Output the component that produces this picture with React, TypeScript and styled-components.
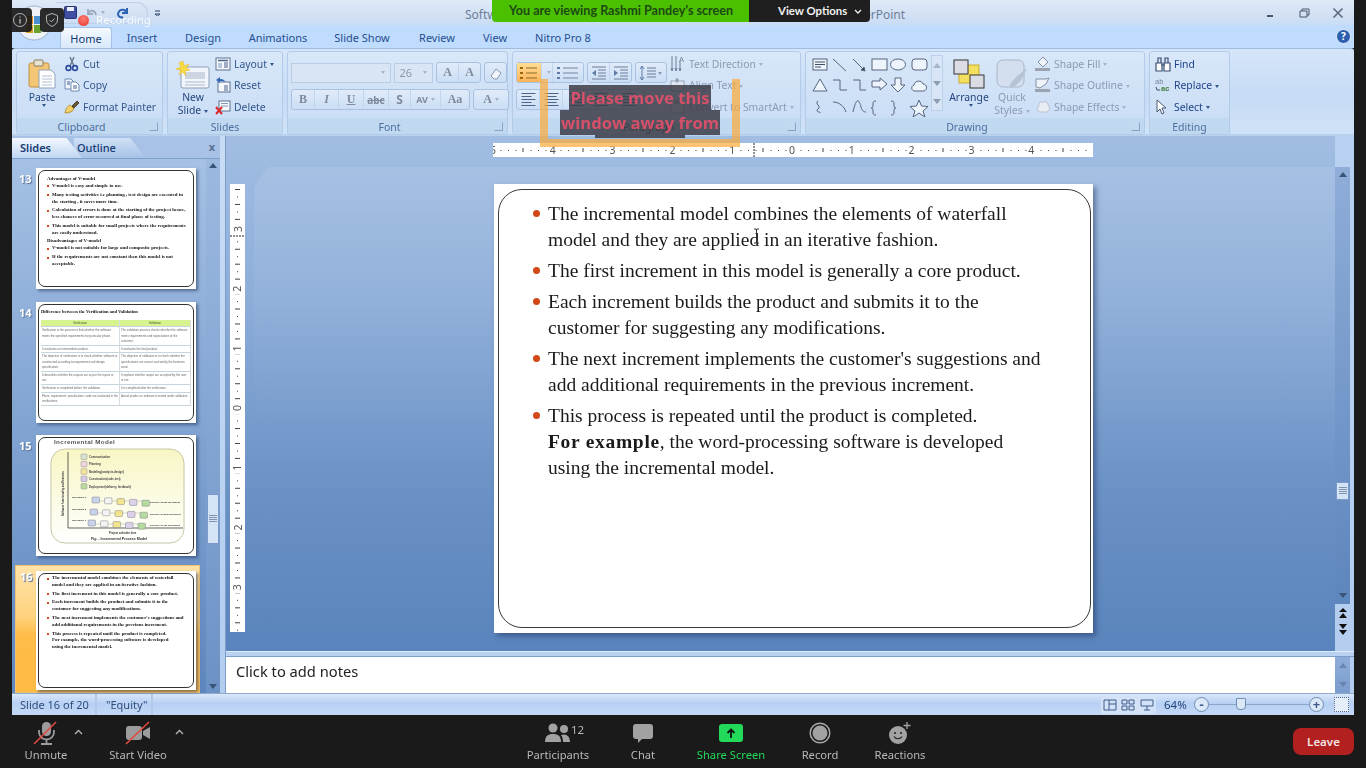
import React from 'react';
import styled, { createGlobalStyle } from 'styled-components';

const GlobalStyle = createGlobalStyle`
  html, body { margin: 0; padding: 0; background: #1a1a1a; }
  body { font-family: "Noto Sans", "Open Sans", sans-serif; overflow: hidden; }
`;

const Page = styled.div`
  position: relative;
  width: 1366px;
  height: 768px;
  display: flex;
  flex-direction: column;
  background: #1a1a1a;
  overflow: hidden;
`;

const Screen = styled.div`
  width: 1342px;
  height: 715px;
  margin-left: 12px;
  display: flex;
  flex-direction: column;
  overflow: hidden;
  filter: blur(0.35px);
`;

/* title bar + tabs */
const TitleBar = styled.div`
  height: 25px;
  flex: none;
  display: flex;
  align-items: center;
  background: linear-gradient(#e0eaf8, #d3e1f4 55%, #c9dcf6);
  color: #6d7f99;
  font-size: 12px;
`;

const Qat = styled.div`
  width: 92px;
  height: 22px;
  margin: 0 0 0 44px;
  padding-left: 8px;
  box-sizing: border-box;
  display: flex;
  align-items: center;
  border: 1px solid #bdcfe8;
  border-left: 0;
  border-radius: 0 12px 12px 0;
`;

const QatGap = styled.span<{ $w: number }>`
  width: ${p => p.$w}px;
  flex: none;
`;

const QatMore = styled.div`
  width: 8px;
  margin-left: 5px;
  display: flex;
  flex-direction: column;
  align-items: center;
  gap: 2px;
`;

const TitleText = styled.div`
  width: 440px;
  margin-left: 304px;
  display: flex;
  justify-content: space-between;
  white-space: nowrap;
  padding-top: 3px;
`;

const WindowButtons = styled.div`
  margin-left: auto;
  display: flex;
  align-items: center;
  gap: 22px;
  padding-right: 10px;
  color: #46566d;
`;

const TabRow = styled.div`
  height: 23px;
  flex: none;
  display: flex;
  align-items: flex-end;
  padding-left: 48px;
  background: #bfdbfd;
  position: relative;
`;

const Tab = styled.div<{ $w: number; $active?: boolean }>`
  width: ${p => p.$w}px;
  height: 21px;
  box-sizing: border-box;
  text-align: center;
  font-size: 11px;
  line-height: 21px;
  color: #25508f;
  ${p => p.$active && `
    background: linear-gradient(#f4f9ff, #d9e8fb);
    border: 1px solid #a6c2e6;
    border-bottom: 0;
    border-radius: 3px 3px 0 0;
    color: #15396f;
  `}
`;

const HelpIcon = styled.div`
  margin-left: auto;
  margin-right: 3px;
  align-self: center;
  width: 13px;
  height: 13px;
  border-radius: 50%;
  background: #2c5fb0;
  border: 1px solid #e7f0fb;
  color: #fff;
  font-size: 10px;
  font-weight: 700;
  line-height: 13px;
  text-align: center;
`;

/* ribbon */
const Ribbon = styled.div`
  height: 88px;
  flex: none;
  box-sizing: border-box;
  padding: 2px 0 0 4px;
  display: flex;
  gap: 4px;
  background: linear-gradient(#d6e6f9, #c6dbf4 55%, #d0e2f7);
  border-top: 1px solid #9fbce0;
  border-bottom: 2px solid #b9d2ee;
  border-radius: 3px 3px 0 0;
`;

const Group = styled.div<{ $w: number }>`
  width: ${p => p.$w}px;
  height: 84px;
  flex: none;
  display: flex;
  flex-direction: column;
  box-sizing: border-box;
  border: 1px solid #b1cbe9;
  border-radius: 3px;
  background: linear-gradient(#d8e7f9, #c8dcf5);
`;

const GroupBody = styled.div`
  flex: 1;
  display: flex;
  padding: 1px 0 0 3px;
  min-height: 0;
`;

const GroupLabel = styled.div<{ $dark?: boolean; $launcher?: boolean }>`
  height: 16px;
  flex: none;
  position: relative;
  box-sizing: border-box;
  padding-right: ${p => (p.$launcher ? 16 : 0)}px;
  background: #c1d8f1;
  text-align: center;
  font-size: 10.5px;
  line-height: 18px;
  color: ${p => (p.$dark ? '#30384a' : '#4c6f9e')};
`;

const Launcher = styled.span`
  position: absolute;
  right: 4px;
  top: 4px;
  width: 7px;
  height: 7px;
  border: 1px solid #8aa2c0;
  border-left-color: #c9d8ec;
  border-top-color: #c9d8ec;
`;

const BigButton = styled.div<{ $w: number; $muted?: boolean; $left?: number }>`
  width: ${p => p.$w}px;
  margin-left: ${p => p.$left || 0}px;
  flex: none;
  display: flex;
  flex-direction: column;
  align-items: center;
  font-size: 10.4px;
  line-height: 13px;
  color: ${p => (p.$muted ? '#8c9cb3' : '#24477f')};
  white-space: nowrap;
`;

const BigIcon = styled.div`
  height: 36px;
  display: flex;
  align-items: flex-end;
  margin-bottom: 2px;
`;

const SmallColumn = styled.div<{ $left?: number; $top?: number }>`
  display: flex;
  flex-direction: column;
  margin-left: ${p => p.$left || 0}px;
  padding-top: ${p => p.$top || 0}px;
`;

const SmallRow = styled.div<{ $muted?: boolean; $dark?: boolean }>`
  height: 21.5px;
  display: flex;
  align-items: center;
  gap: 3px;
  font-size: 10.4px;
  white-space: nowrap;
  color: ${p => (p.$muted ? '#8a9bb3' : p.$dark ? '#20438a' : '#33568c')};
`;

const SelectLabel = styled.span`
  margin-left: 2px;
`;

const Caret = styled.span<{ $muted?: boolean }>`
  display: inline-block;
  width: 0;
  height: 0;
  margin-left: 3px;
  border: 2.5px solid transparent;
  border-top: 3px solid ${p => (p.$muted ? '#a3b2c6' : '#33568c')};
  border-bottom: 0;
  vertical-align: middle;
`;

const ControlColumn = styled.div`
  display: flex;
  flex-direction: column;
  gap: 6px;
  padding-top: 9px;
`;

const ControlRow = styled.div`
  display: flex;
  align-items: center;
  gap: 3px;
  height: 21px;
`;

const Field = styled.div<{ $w: number }>`
  width: ${p => p.$w}px;
  height: 20px;
  box-sizing: border-box;
  display: flex;
  align-items: center;
  justify-content: flex-end;
  padding-right: 5px;
  gap: 8px;
  font-size: 11px;
  color: #8b97a8;
  background: #d9e5f5;
  border: 1px solid #b9cde6;
`;

const ButtonGroup = styled.div`
  height: 21px;
  box-sizing: border-box;
  display: flex;
  align-items: center;
  border: 1px solid #a9c2e1;
  border-radius: 3px;
  background: linear-gradient(#e0ebf9, #cbdef5);
`;

const FmtButton = styled.div<{ $w: number; $hot?: boolean; $serif?: boolean; $size?: number }>`
  width: ${p => p.$w}px;
  height: 19px;
  display: flex;
  align-items: center;
  justify-content: center;
  font-family: ${p => (p.$serif ? '"Liberation Serif", serif' : 'inherit')};
  font-size: ${p => p.$size || 12}px;
  font-weight: 700;
  color: #7e8a9d;
  border-right: 1px solid #c3d5ec;
  background: ${p => (p.$hot ? 'linear-gradient(#ffdd94, #fdb45a)' : 'transparent')};
  &:last-child { border-right: 0; }
`;

const GalleryScroll = styled.div`
  width: 12px;
  height: 56px;
  margin-top: 2px;
  display: flex;
  flex-direction: column;
  align-items: center;
  justify-content: space-around;
  background: #d8e5f6;
  border: 1px solid #bcd0ea;
  box-sizing: border-box;
`;

/* workspace */
const Workspace = styled.div`
  flex: 1;
  min-height: 0;
  display: flex;
`;

const SlidePane = styled.div`
  width: 208px;
  flex: none;
  display: flex;
  flex-direction: column;
  background: linear-gradient(#a8c3e6, #5e87bf);
`;

const PaneTabs = styled.div`
  height: 22px;
  flex: none;
  display: flex;
  align-items: flex-end;
  border-bottom: 1px solid #7fa0cb;
  position: relative;
  background: #a7c2e6;
  font-size: 11px;
`;

const PaneTab = styled.div<{ $active?: boolean; $w: number }>`
  width: ${p => p.$w}px;
  height: 20px;
  line-height: 20px;
  box-sizing: border-box;
  padding-left: ${p => (p.$active ? 8 : 3)}px;
  font-weight: ${p => (p.$active ? 600 : 500)};
  color: #163a72;
  clip-path: polygon(0 0, 78% 0, 100% 100%, 0 100%);
  background: ${p => (p.$active ? 'linear-gradient(#f3f8ff, #c0d6f2)' : 'linear-gradient(#cfe0f6, #a6c2e7)')};
  margin-right: ${p => (p.$active ? -8 : 0)}px;
  position: relative;
  z-index: ${p => (p.$active ? 1 : 0)};
`;

const PaneClose = styled.span`
  position: absolute;
  right: 5px;
  top: 3px;
  font-size: 11px;
  font-weight: 700;
  color: #5a6f8f;
`;

const PaneBody = styled.div`
  flex: 1;
  min-height: 0;
  display: flex;
`;

const ThumbList = styled.div`
  flex: 1;
  padding: 9px 0 0 3px;
  display: flex;
  flex-direction: column;
  gap: 12.5px;
`;

const ThumbRow = styled.div<{ $selected?: boolean }>`
  width: 185px;
  height: ${p => (p.$selected ? 128 : 121)}px;
  flex: none;
  margin-top: ${p => (p.$selected ? -3.5 : 0)}px;
  box-sizing: border-box;
  display: flex;
  align-items: flex-start;
  padding: ${p => (p.$selected ? '5px 0 0 20px' : '0 0 0 21px')};
  position: relative;
  ${p => p.$selected && `
    background: linear-gradient(#ffe3a8, #ffd27e 40%, #ffbc48 55%, #ffbb44);
    border: 1px solid #f0c274;
  `}
`;

const ThumbNumber = styled.span`
  position: absolute;
  left: 4px;
  top: 3px;
  color: #fff;
  font-size: 11px;
  font-weight: 700;
  text-shadow: 1px 1px 1px #56719a;
`;

const Thumb = styled.div<{ $h?: number }>`
  width: 160px;
  height: ${p => p.$h || 121}px;
  flex: none;
  padding: 2px;
  box-sizing: border-box;
  background: #fff;
  box-shadow: 2px 2px 3px rgba(30, 50, 90, 0.55);
`;

const ThumbFrame = styled.div<{ $top?: number; $bare?: boolean }>`
  height: 100%;
  box-sizing: border-box;
  border: 1px solid #333;
  border-radius: 7px;
  padding: ${p => (p.$bare ? '0' : `${p.$top ?? 5}px 6px 0 8px`)};
  font-family: "Liberation Serif", serif;
  font-size: 4.9px;
  line-height: 6.9px;
  font-weight: 700;
  color: #111;
  overflow: hidden;
`;

const ThumbHeading = styled.div`
  white-space: nowrap;
`;

const ThumbItem = styled.div`
  position: relative;
  padding-left: 5px;
  margin-bottom: 1.8px;
  white-space: nowrap;
  &::before {
    content: '';
    position: absolute;
    left: 0;
    top: 2.5px;
    width: 2px;
    height: 2px;
    background: #d34817;
  }
`;

const TableTitle = styled.div`
  font-size: 4.5px;
  line-height: 6px;
  white-space: nowrap;
  margin: -1px 0 5px -6px;
`;

const MiniTable = styled.div`
  margin: 0 -4px 0 -6px;
  display: grid;
  grid-template-columns: 79px 1fr;
  font-family: "Liberation Sans", sans-serif;
  font-size: 2.9px;
  line-height: 5.3px;
  font-weight: 400;
  color: #666;
`;

const MiniCell = styled.div<{ $head?: boolean }>`
  padding: 1px 1px 0.5px;
  border-bottom: 1px solid #c8d4dc;
  border-right: 1px solid #d5dde3;
  text-align: ${p => (p.$head ? 'center' : 'left')};
  background: ${p => (p.$head ? '#d6f38f' : 'transparent')};
  color: ${p => (p.$head ? '#4a5a2c' : '#666')};
`;

const PaneScroll = styled.div`
  width: 14px;
  flex: none;
  display: flex;
  flex-direction: column;
  align-items: center;
  justify-content: space-between;
  position: relative;
  background: linear-gradient(#9cb9e0, #6c92c5);
  padding: 4px 0;
  box-sizing: border-box;
`;

const ScrollThumb = styled.div<{ $top: number; $h: number }>`
  position: absolute;
  top: ${p => p.$top}px;
  left: 1px;
  right: 1px;
  height: ${p => p.$h}px;
  box-sizing: border-box;
  display: flex;
  align-items: center;
  justify-content: center;
  border: 1px solid #7b9acb;
  background: #d4e3f6;
`;

const ScrollGrip = styled.span`
  width: 8px;
  height: 8px;
  background: repeating-linear-gradient(#7f93b0 0 1px, transparent 1px 2px);
`;

const Arrow = styled.span<{ $up?: boolean; $color?: string }>`
  width: 0;
  height: 0;
  border: 4px solid transparent;
  ${p => (p.$up
    ? `border-bottom: 5px solid ${p.$color || '#3a5378'}; border-top: 0;`
    : `border-top: 5px solid ${p.$color || '#3a5378'}; border-bottom: 0;`)}
`;

const Splitter = styled.div`
  width: 6px;
  flex: none;
  background: linear-gradient(#c9dcf5, #b3cdef);
  border-right: 1px solid #7c9dc9;
  box-sizing: border-box;
`;

const Editor = styled.div`
  flex: 1;
  min-width: 0;
  display: flex;
  flex-direction: column;
`;

const EditorTop = styled.div`
  flex: 1;
  min-height: 0;
  display: flex;
`;

const Canvas = styled.div`
  flex: 1;
  min-width: 0;
  position: relative;
  display: flex;
  flex-direction: column;
  background: linear-gradient(#a1bde3, #8eaed9 30%, #6a91c5 70%, #5a84bd);
  /* the theme's pale sheet behind the slide */
  &::before {
    content: '';
    position: absolute;
    left: 28px;
    top: 31px;
    right: 0;
    bottom: 0;
    background: linear-gradient(rgba(255, 255, 255, 0.09), rgba(255, 255, 255, 0) 55%);
    clip-path: polygon(14px 0, 100% 0, 100% 100%, 0 100%, 0 20px);
  }
`;

const RulerRow = styled.div`
  height: 48px;
  flex: none;
  position: relative;
  padding: 7px 0 0 267px;
  box-sizing: border-box;
`;

const CanvasBody = styled.div`
  flex: 1;
  min-height: 0;
  position: relative;
  display: flex;
  padding-left: 4px;
`;

const Slide = styled.div`
  width: 599px;
  height: 449px;
  flex: none;
  margin-left: 249px;
  padding: 5px 2px 5px 4px;
  box-sizing: border-box;
  background: #fff;
  box-shadow: 3px 3px 5px rgba(30, 50, 90, 0.5);
`;

const SlideFrame = styled.div`
  height: 100%;
  box-sizing: border-box;
  border: 1px solid #3a3a3a;
  border-radius: 24px;
  padding: 11px 0 0 34px;
  font-family: "Liberation Serif", serif;
  font-size: 19.5px;
  line-height: 26.3px;
  color: #1a1a1a;
`;

const SlideItem = styled.div`
  display: flex;
  margin-bottom: 4.4px;
`;

const BulletCol = styled.div`
  width: 15px;
  flex: none;
  padding-top: 9px;
`;

const BulletDot = styled.div`
  width: 7px;
  height: 7px;
  border-radius: 50%;
  background: #d34817;
`;

const SlideLine = styled.div`
  white-space: nowrap;
`;

const SlideBold = styled.b`
  letter-spacing: 0.7px;
`;

const EditorScroll = styled.div`
  width: 19px;
  flex: none;
  position: relative;
  box-sizing: border-box;
  background: linear-gradient(#b9d1f0, #b4cdee);
  display: flex;
  flex-direction: column;
  align-items: center;
  padding-right: 4px;
`;

const ScrollTrack = styled.div`
  margin-top: 31px;
  width: 15px;
  height: 437px;
  position: relative;
  display: flex;
  flex-direction: column;
  align-items: center;
  justify-content: space-between;
  padding: 5px 0 6px;
  box-sizing: border-box;
  background: linear-gradient(#8fadd8, #5d86bd);
`;

const PageJump = styled.div`
  margin-top: 4px;
  display: flex;
  flex-direction: column;
  gap: 5px;
  align-items: center;
`;

const NotesRule = styled.div`
  height: 6px;
  flex: none;
  background: #b9d2f1;
  border-top: 1px solid #dcebfd;
  border-bottom: 1px solid #7c9dc9;
  box-sizing: border-box;
`;

const NotesRow = styled.div`
  height: 36px;
  flex: none;
  display: flex;
`;

const Notes = styled.div`
  flex: 1;
  background: #fff;
  padding: 2px 0 0 10px;
  font-size: 14.7px;
  line-height: 24px;
  color: #222;
`;

const NotesScroll = styled.div`
  width: 19px;
  flex: none;
  box-sizing: border-box;
  padding-right: 4px;
  background: #b4cdee;
  & > div {
    height: 100%;
    background: linear-gradient(#8fadd8, #7a9ccd);
    display: flex;
    flex-direction: column;
    align-items: center;
    justify-content: space-between;
    padding: 6px 0;
    box-sizing: border-box;
  }
`;

const StatusBar = styled.div`
  height: 22px;
  flex: none;
  display: flex;
  align-items: center;
  box-sizing: border-box;
  background: linear-gradient(#d9e7fa, #b7d0f4 45%, #c5d9f6);
  border-top: 1px solid #8fa9c9;
  font-size: 11px;
  color: #2f4c7c;
  white-space: nowrap;
`;

const StatusCell = styled.div<{ $w: number; $pad: number }>`
  width: ${p => p.$w}px;
  box-sizing: border-box;
  padding-left: ${p => p.$pad}px;
  height: 100%;
  line-height: 21px;
  border-right: 2px solid #b3c9e6;
`;

const StatusRight = styled.div`
  margin-left: auto;
  display: flex;
  align-items: center;
  height: 100%;
  padding-right: 5px;
`;

const ViewGroup = styled.div`
  width: 55px;
  height: 18px;
  display: flex;
  align-items: center;
  justify-content: space-around;
  background: #d3e2f7;
  border-radius: 2px;
`;

const Zoom = styled.span`
  width: 38px;
  padding-left: 8px;
  box-sizing: border-box;
  color: #1f4279;
  font-size: 11.5px;
`;

const ZoomTrack = styled.div`
  width: 100px;
  height: 1px;
  background: #8fa7c7;
  position: relative;
`;

const ZoomThumb = styled.span`
  position: absolute;
  left: 27px;
  top: -6px;
  width: 8px;
  height: 10px;
  border: 1px solid #6f8cb3;
  border-radius: 1px 1px 4px 4px;
  background: #dbe8f8;
`;

const ZoomButton = styled.span`
  width: 15px;
  height: 15px;
  border-radius: 50%;
  box-sizing: border-box;
  border: 1px solid #6f8cb3;
  background: #dbe8f8;
  color: #3d5c8a;
  font-size: 13px;
  font-weight: 700;
  line-height: 12px;
  text-align: center;
`;

const FitButton = styled.span`
  width: 15px;
  height: 15px;
  margin-left: 10px;
  background: #e6eef9;
  border: 1px dotted #50688c;
  box-sizing: border-box;
`;

/* meeting toolbar */
const Toolbar = styled.div`
  height: 53px;
  flex: none;
  display: flex;
  align-items: flex-start;
  padding-left: 12px;
  background: #1a1a1a;
`;

const ToolButton = styled.div<{ $w: number; $left?: number; $green?: boolean }>`
  width: ${p => p.$w}px;
  margin-left: ${p => p.$left || 0}px;
  flex: none;
  display: flex;
  flex-direction: column;
  align-items: center;
  position: relative;
  font-size: 11.2px;
  line-height: 16px;
  color: ${p => (p.$green ? '#23d959' : '#b9b9b9')};
  white-space: nowrap;
`;

const ToolIcon = styled.div`
  height: 26px;
  margin: 5px 0 1px;
  display: flex;
  align-items: center;
  position: relative;
`;

const Chevron = styled.svg<{ $right: number }>`
  position: absolute;
  right: ${p => p.$right}px;
  top: 14px;
`;

const Count = styled.span`
  position: absolute;
  left: 26px;
  top: 2px;
  font-size: 11.5px;
  color: #b9b9b9;
`;

const LeaveButton = styled.div`
  width: 61px;
  height: 27px;
  margin: 13px 12px 0 auto;
  border-radius: 8px;
  background: #b32020;
  color: #f4e6e6;
  font-size: 11.5px;
  font-weight: 600;
  line-height: 27px;
  text-align: center;
`;

/* things lying over the shared screen */
const Banner = styled.div`
  position: absolute;
  left: 492px;
  top: 0;
  width: 378px;
  height: 22px;
  display: flex;
  border-radius: 0 0 4px 4px;
  overflow: hidden;
  font-family: Lato, "Noto Sans", sans-serif;
  font-weight: 700;
  line-height: 22px;
  white-space: nowrap;
`;

const BannerGreen = styled.div`
  width: 257px;
  padding-left: 17px;
  box-sizing: border-box;
  background: #4bc000;
  color: #1d4a12;
  font-size: 12.6px;
`;

const BannerDark = styled.div`
  flex: 1;
  padding-left: 29px;
  background: #1f1f1f;
  color: #f2f2f2;
  font-size: 11.4px;
  display: flex;
  align-items: center;
  gap: 7px;
`;

const OfficeOrb = styled.svg`
  position: absolute;
  left: 15px;
  top: 3px;
`;

const BadgeGroup = styled.div`
  position: absolute;
  left: 8px;
  top: 8px;
  display: flex;
  gap: 8px;
`;

const Badge = styled.div`
  width: 24px;
  height: 24px;
  display: flex;
  align-items: center;
  justify-content: center;
  border-radius: 4px;
  background: rgba(26, 26, 26, 0.92);
`;

const RecDot = styled.span`
  position: absolute;
  left: 78px;
  top: 15px;
  width: 11px;
  height: 11px;
  border-radius: 50%;
  background: radial-gradient(circle at 50% 35%, #ff7b70, #e23a30);
`;

const RecLabel = styled.span`
  position: absolute;
  left: 96px;
  top: 12px;
  font-size: 11.5px;
  color: rgba(255, 255, 255, 0.82);
`;

const WarnFrame = styled.div`
  position: absolute;
  left: 540px;
  top: 79px;
  width: 200px;
  height: 68px;
  box-sizing: border-box;
  border: 8px solid rgba(250, 172, 60, 0.72);
  border-top: 0;
`;

const WarnText = styled.div`
  position: absolute;
  left: 552px;
  top: 85px;
  width: 176px;
  display: flex;
  flex-direction: column;
  align-items: center;
  font-family: "Open Sans", sans-serif;
  font-size: 16.6px;
  font-weight: 700;
  line-height: 25px;
  color: #d65069;
  white-space: nowrap;
  & > span {
    padding: 0 1px;
    background: rgba(62, 62, 72, 0.86);
  }
`;

const WarnFoot = styled.div`
  position: absolute;
  left: 595px;
  top: 135px;
  width: 90px;
  height: 3px;
  background: rgba(62, 62, 72, 0.86);
`;

const IBeam = styled.svg`
  position: absolute;
  left: 753px;
  top: 228px;
`;

/* icons */
const Svg: React.FC<{ w: number; h?: number; children: React.ReactNode }> = ({ w, h, children }) => (
  <svg width={w} height={h || w} viewBox={`0 0 ${w} ${h || w}`} fill="none" style={{ flex: 'none' }}>{children}</svg>
);

const PasteIcon = () => (
  <Svg w={28} h={30}>
    <rect x="1" y="4" width="20" height="24" rx="2" fill="#f3c675" stroke="#c18f45" />
    <rect x="6" y="1" width="9" height="6" rx="1" fill="#e8e2d2" stroke="#8b7b5c" />
    <path d="M11 11h12l4 4v14H11z" fill="#fff" stroke="#8fa2bb" />
    <path d="M14 17h10M14 20h10M14 23h10M14 26h10" stroke="#b3c0d2" />
  </Svg>
);

const CutIcon = () => (
  <Svg w={16}>
    <path d="M6 1l4 9M10 1L6 10" stroke="#68748a" strokeWidth="1.4" />
    <circle cx="4.5" cy="12" r="2.4" stroke="#2c4b9a" strokeWidth="1.6" />
    <circle cx="11" cy="12" r="2.4" stroke="#2c4b9a" strokeWidth="1.6" />
  </Svg>
);

const CopyIcon = () => (
  <Svg w={16}>
    <path d="M1 2h6l2 2v8H1z" fill="#eef3fa" stroke="#6f8bb0" />
    <path d="M7 5h5l3 3v6H7z" fill="#fff" stroke="#6f8bb0" />
    <path d="M9 9h4M9 11h4M3 5h3M3 7h3" stroke="#3f5f95" />
  </Svg>
);

const BrushIcon = () => (
  <Svg w={16}>
    <path d="M1 14c1-5 3-7 5-8l4 4c-1 2-4 4-9 4z" fill="#f2d268" stroke="#b3913a" />
    <path d="M8 7l5-5 2 2-5 5z" fill="#6a5a3a" stroke="#4a3f28" />
  </Svg>
);

const NewSlideIcon = () => (
  <Svg w={34} h={28}>
    <rect x="5" y="6" width="28" height="21" rx="2" fill="#f2f6fc" stroke="#8e9db3" />
    <rect x="9" y="11" width="20" height="7" fill="#cdd5e2" />
    <path d="M9 21h20M9 24h20" stroke="#aeb9c9" />
    <path d="M7 0l1 5 5-2-3 4 4 2-5 1 1 5-3-4-4 3 2-5-5-1 5-2-2-4z" fill="#f7dc3f" stroke="#eab51a" strokeWidth="0.5" />
  </Svg>
);

const LayoutIcon = () => (
  <Svg w={16}>
    <rect x="1" y="2" width="14" height="12" fill="#f5f8fc" stroke="#5d7292" />
    <path d="M3 4.500h10" stroke="#4a6188" strokeWidth="1.500" />
    <rect x="3" y="7" width="4" height="5" fill="#b8c7dc" />
    <path d="M9 7h4M9 9h4M9 11h4" stroke="#4a6188" />
  </Svg>
);

const ResetIcon = () => (
  <Svg w={16}>
    <rect x="3" y="5" width="12" height="10" fill="#f5f8fc" stroke="#5d7292" />
    <path d="M9 9h4M9 11h4M9 13h4" stroke="#4a6188" />
    <path d="M1 3l4-3v2c3 0 5 1 5 3-1-1-3-1-5-1v2z" fill="#3566b5" />
  </Svg>
);

const DeleteIcon = () => (
  <Svg w={16}>
    <rect x="4" y="2" width="11" height="10" fill="#f5f8fc" stroke="#5d7292" />
    <path d="M6 4.500h7M6 7h7" stroke="#8496b0" />
    <path d="M1 8l6 7M7 8l-6 7" stroke="#d8282a" strokeWidth="2" />
  </Svg>
);

const Lines: React.FC<{ w?: number; align?: 'l' | 'c' | 'r' | 'j' }> = ({ w = 15, align = 'l' }) => {
  const rows = [0, 1, 2, 3, 4];
  return (
    <Svg w={w} h={13}>
      {rows.map(i => {
        const len = align === 'j' || i % 2 === 0 ? w - 1 : w - 5;
        const x = align === 'l' || align === 'j' ? 0.500 : align === 'c' ? (w - len) / 2 : w - len;
        return <path key={i} d={`M${x} ${i * 3 + 0.500}h${len}`} stroke="#4d6387" />;
      })}
    </Svg>
  );
};

const BulletsIcon = () => (
  <Svg w={18} h={14}>
    <path d="M0 2h3M0 7h3M0 12h3" stroke="#99690f" strokeWidth="2" />
    <path d="M6 2h11M6 7h11M6 12h11" stroke="#8a6a2a" />
  </Svg>
);

const NumbersIcon = () => (
  <Svg w={24} h={14}>
    <path d="M1 2h3M1 7h3M1 12h3" stroke="#5d7ba6" strokeWidth="2" />
    <path d="M7 2h15M7 7h15M7 12h15" stroke="#75859c" />
  </Svg>
);

const IndentIcon: React.FC<{ flip?: boolean }> = ({ flip }) => (
  <Svg w={16} h={14}>
    <path d="M1 1h14M7 4h8M7 7h8M7 10h8M1 13h14" stroke="#6d7f99" />
    <path d={flip ? 'M1 4l4 3-4 3z' : 'M5 4L1 7l4 3z'} fill="#5d7ba6" />
  </Svg>
);

const SpacingIcon = () => (
  <Svg w={24} h={16}>
    <path d="M3 1v14M1 4l2-3 2 3M1 12l2 3 2-3" stroke="#5d7ba6" />
    <path d="M8 3h9M8 6h9M8 9h9M8 12h9" stroke="#6d7f99" />
    <path d="M19 7h4l-2 3z" fill="#8b9ab0" />
  </Svg>
);

const TextDirIcon = () => (
  <Svg w={16} h={18}>
    <path d="M2 1v14M6 1v14M10 6v9" stroke="#6e7f96" />
    <path d="M1 13l1 3 1-3M5 13l1 3 1-3M9 13l1 3 1-3" stroke="#6e7f96" />
    <text x="9" y="7" fontSize="7.500" fill="#6e7f96" fontFamily="Liberation Sans">A</text>
  </Svg>
);

const ShapeGallery = () => (
  <Svg w={119} h={60}>
    <g stroke="#56657f" fill="#eef4fc">
      <rect x="1" y="2" width="14" height="11" />
      <path d="M3 5h10M3 7.500h10M3 10h6" stroke="#3c4c66" fill="none" />
      <path d="M21 2l13 12M41 2l12 12" fill="none" />
      <path d="M53 14l-4-1 3-3z" fill="#3c4c66" />
      <rect x="60" y="2" width="15" height="11" />
      <ellipse cx="86" cy="7.500" rx="7.500" ry="5.500" />
      <rect x="100" y="2" width="15" height="11" rx="3" />
      <path d="M1 34l7-12 7 12z" />
      <path d="M21 23h7v10h7M41 23h7v10h6" fill="none" />
      <path d="M60 24h8v-3l7 6-7 6v-3h-8z" />
      <path d="M83 21h6v7h4l-7 7-7-7h4z" />
      <path d="M102 34c-3-1-3-5 0-6 1-5 8-5 9-1 4 0 5 6 1 7z" />
      <path d="M6 44c-4 3 4 5 0 8s4 3 2 4" fill="none" />
      <path d="M21 45c6 0 11 4 13 10M41 55c3-14 6-14 8-5 1 4 3 5 5 5" fill="none" />
      <path d="M64 44c-3 0-3 1-3 4s-1 3-2 3c1 0 2 0 2 3s0 4 3 4M79 44c3 0 3 1 3 4s1 3 2 3c-1 0-2 0-2 3s0 4-3 4" fill="none" />
      <path d="M107 43l2.500 6 6.500 .500-5 4.500 2 6-6-4-6 4 2-6-5-4.500 6.500-.500z" />
    </g>
  </Svg>
);

const ArrangeIcon = () => (
  <Svg w={32} h={30}>
    <rect x="6" y="6" width="20" height="18" fill="#f4df5e" stroke="#c9ae2e" />
    <rect x="1" y="1" width="14" height="14" fill="#dcdce6" stroke="#333" />
    <rect x="17" y="16" width="14" height="13" fill="#d9dde3" stroke="#333" />
  </Svg>
);

const QuickStylesIcon = () => (
  <Svg w={32} h={30}>
    <rect x="1" y="1" width="27" height="27" rx="6" fill="#d3dfef" stroke="#a8b6c9" />
    <path d="M14 29c-1-7 8-12 17-20-4 10-9 19-17 20z" fill="#b6c3d6" />
  </Svg>
);

const FillIcon: React.FC<{ kind: 'fill' | 'line' | 'fx' }> = ({ kind }) => (
  <Svg w={16}>
    {kind === 'fill' && <><path d="M3 6l5-5 5 5-5 5z" fill="#eef3fa" stroke="#8392a6" /><rect y="12" width="15" height="3" fill="#9aa3af" /></>}
    {kind === 'line' && <><path d="M1 10V2h10l3-1-3 6-6 4z" fill="#eef3fa" stroke="#8392a6" /><rect y="12" width="15" height="3" fill="#9aa3af" /></>}
    {kind === 'fx' && <path d="M2 11l3-8h7l3 7-3 3H5z" fill="#e8edf4" stroke="#b9c3d1" />}
  </Svg>
);

const FindIcon = () => (
  <Svg w={16}>
    <path d="M1 7h6v8H1zM9 7h6v8H9z" fill="#fff" stroke="#3b4f73" strokeWidth="1.200" />
    <path d="M3 7V2h3v5M10 7V2h3v5M6 9h4" stroke="#3b4f73" strokeWidth="1.200" />
  </Svg>
);

const ReplaceIcon = () => (
  <Svg w={16}>
    <text x="0" y="7" fontSize="7.500" fill="#75849b" fontFamily="Liberation Sans">ab</text>
    <text x="6" y="14" fontSize="7.500" fontWeight="700" fill="#3f7c38" fontFamily="Liberation Sans">ac</text>
    <path d="M1 10l1 3h3" stroke="#3b4f73" />
  </Svg>
);

const SelectIcon = () => (
  <Svg w={14} h={16}>
    <path d="M2 1v12l3-3 2 5 2-1-2-5h4z" fill="#fff" stroke="#4b5a70" />
  </Svg>
);

const DisabledBox = () => (
  <Svg w={16} h={14}>
    <rect x="1" y="3" width="13" height="10" fill="#dfe7f2" stroke="#95a3b6" />
    <path d="M7 0v5M5 2h4" stroke="#7f8fa5" />
  </Svg>
);

const MicOff = () => (
  <Svg w={26} h={24}>
    <rect x="9" y="1" width="9" height="14" rx="4.500" fill="#9c9c9c" />
    <path d="M6 9v2a7.500 7.500 0 0015 0V9M13.500 19v3M8 23h11" stroke="#9c9c9c" strokeWidth="1.800" />
    <path d="M1 23L23 1" stroke="#e2483f" strokeWidth="1.600" />
  </Svg>
);

const VideoOff = () => (
  <Svg w={26} h={24}>
    <rect x="1" y="5" width="16" height="14" rx="3" fill="#9c9c9c" />
    <path d="M18 10l7-4v12l-7-4z" fill="#9c9c9c" />
    <path d="M1 23L24 1" stroke="#e2483f" strokeWidth="1.600" />
  </Svg>
);

const PeopleIcon = () => (
  <Svg w={26} h={20}>
    <circle cx="8" cy="5" r="4.500" fill="#a2a2a2" />
    <circle cx="19" cy="6" r="4" fill="#a2a2a2" />
    <path d="M0 19c0-6 3-8 8-8s8 2 8 8z" fill="#a2a2a2" />
    <path d="M16 12c5-2 9 1 9 7h-7c0-3-.5-5-2-7z" fill="#a2a2a2" />
  </Svg>
);

const ChatIcon = () => (
  <Svg w={22} h={20}>
    <path d="M4 1h14a3 3 0 013 3v9a3 3 0 01-3 3H10l-4 4v-4H4a3 3 0 01-3-3V4a3 3 0 013-3z" fill="#a2a2a2" />
  </Svg>
);

const ShareIcon = () => (
  <Svg w={24} h={19}>
    <rect width="24" height="18" rx="3" fill="#23d959" />
    <path d="M12 14V6M8.500 9L12 5.500 15.500 9" stroke="#111" strokeWidth="1.800" />
  </Svg>
);

const RecordIcon = () => (
  <Svg w={22}>
    <circle cx="11" cy="11" r="9.800" stroke="#a8a8a8" strokeWidth="1.500" />
    <circle cx="11" cy="11" r="7.500" fill="#a2a2a2" />
  </Svg>
);

const ReactionIcon = () => (
  <Svg w={24} h={24}>
    <circle cx="10" cy="14" r="9" fill="#a2a2a2" />
    <circle cx="7" cy="12" r="1" fill="#1a1a1a" />
    <circle cx="13" cy="12" r="1" fill="#1a1a1a" />
    <path d="M6 15.500c2 3 6 3 8 0" stroke="#1a1a1a" strokeWidth="1.200" />
    <path d="M19 1v7M15.500 4.500h7" stroke="#a2a2a2" strokeWidth="1.300" />
  </Svg>
);

const UpChevron = ({ right }: { right: number }) => (
  <Chevron $right={right} width="9" height="6" viewBox="0 0 9 6" fill="none">
    <path d="M1 5l3.500-3.500L8 5" stroke="#b5b5b5" strokeWidth="1.300" />
  </Chevron>
);

const Ruler = () => {
  const marks = Array.from({ length: 80 }, (_, i) => i * 7.5);
  const numbers = [5, 4, 3, 2, 1, 0, 1, 2, 3, 4];
  return (
    <svg width="600" height="14" style={{ display: 'block', background: '#fff' }} fontFamily="Noto Sans" fontSize="10.500" fill="#555">
      {marks.map((x, i) => (i % 8 === 0 ? null : (
        i % 4 === 0
          ? <path key={i} d={`M${x} 5v4`} stroke="#444" />
          : <rect key={i} x={x} y="7" width="1" height="1" fill="#444" />
      )))}
      {numbers.map((n, i) => <text key={i} x={i * 59.8} y="11" textAnchor="middle">{n}</text>)}
      <path d="M261 0v14" stroke="#222" strokeDasharray="2 1" />
    </svg>
  );
};

const VerticalRuler = () => {
  const marks = Array.from({ length: 60 }, (_, i) => 5 + i * 7.47);
  const numbers = [3, 2, 1, 0, 1, 2, 3];
  return (
    <svg width="15" height="448" style={{ display: 'block', background: '#fff', flex: 'none' }} fontFamily="Noto Sans" fontSize="10.500" fill="#555">
      {marks.map((y, i) => (i % 2 === 0
        ? <rect key={i} x="5" y={y} width="5" height="1" fill="#444" />
        : <rect key={i} x="7" y={y} width="1" height="1" fill="#444" />))}
      {numbers.map((n, i) => {
        const y = 45 + i * 59.7;
        return (
          <g key={i}>
            <rect x="3" y={y - 6} width="9" height="12" fill="#fff" />
            <text x="7.500" y={y + 4} textAnchor="middle" transform={`rotate(-90 7.500 ${y})`}>{n}</text>
          </g>
        );
      })}
      <path d="M0 52h15" stroke="#222" strokeDasharray="2 1" />
    </svg>
  );
};

const IncrementDiagram = () => {
  const legend = [['#d9e3d0', 'Communication'], ['#f0d5dd', 'Planning'], ['#f3e49a', 'Modeling(analysis,design)'], ['#d5c8e6', 'Construction(code,test)'], ['#b9dba0', 'Deployment(delivery, feedback)']];
  const rows = [
    { y: 63, x: 53, label: 'Increment n', tail: 'Delivery of nth increment' },
    { y: 75, x: 51, label: 'Increment 2', tail: 'Delivery of 2nd increment' },
    { y: 86, x: 49, label: 'Increment 1', tail: 'Delivery of 1st increment' },
  ];
  const fills = ['#c8d3ea', '#f4f4f4', '#f2e58e', '#dcd0ea', '#b5dba0'];
  return (
    <svg width="154" height="115" viewBox="0 0 154 115" style={{ display: 'block' }} fontFamily="Liberation Sans" fill="none">
      <defs>
        <linearGradient id="incBg" x1="0" y1="0" x2="0" y2="1">
          <stop offset="0" stopColor="#f8f6c4" />
          <stop offset="1" stopColor="#ffffff" />
        </linearGradient>
      </defs>
      <text x="15" y="6" fontSize="6.200" fontWeight="700" fill="#555" letterSpacing="0.400">Incremental Model</text>
      <rect x="12" y="11" width="133" height="94" rx="14" fill="url(#incBg)" stroke="#c7c7a8" />
      <path d="M29 14v76h115" stroke="#222" strokeWidth="0.700" />
      <text x="25" y="78" fontSize="2.700" fill="#333" transform="rotate(-90 25 78)">Software functionality and features</text>
      {legend.map(([c, t], i) => (
        <g key={t}>
          <rect x="42" y={16 + i * 7.400} width="6" height="5.500" rx="1" fill={c} stroke="#778" strokeWidth="0.400" />
          <text x="50" y={20 + i * 7.400} fontSize="2.800" fill="#444">{t}</text>
        </g>
      ))}
      {rows.map(r => (
        <g key={r.y}>
          <text x="33" y={r.y - 3} fontSize="2.500" fill="#333">{r.label}</text>
          <path d={`M${r.x} ${r.y}h52`} stroke="#777" strokeWidth="0.300" />
          {fills.map((f, i) => (
            <rect key={i} x={r.x + i * 12.500} y={r.y - 4 + i * 0.800} width="7.500" height="6" rx="1" fill={f} stroke="#667" strokeWidth="0.400" />
          ))}
          <text x="111" y={r.y + 2} fontSize="2.500" fill="#333">{r.tail}</text>
        </g>
      ))}
      <text x="70" y="96" fontSize="2.700" fill="#333">Project calendar time</text>
      <text x="52" y="102" fontSize="3.600" fontWeight="700" fill="#333">Fig. - Incremental Process Model</text>
    </svg>
  );
};

const thumb13 = [
  { head: 'Advantages of V-model' },
  { item: ['V-model is easy and simple to use.'] },
  { item: ['Many testing activities i.e planning , test design are executed in', 'the starting , it saves more time.'] },
  { item: ['Calculation of errors is done at the starting of the project hence,', 'less chances of error occurred at final phase of testing.'] },
  { item: ['This model is suitable for small projects where the requirements', 'are easily understood.'] },
  { head: 'Disadvantages of V-model' },
  { item: ['V-model is not suitable for large and composite projects.'] },
  { item: ['If the requirements are not constant then this model is not', 'acceptable.'] },
];

const table14 = [
  ['Verification', 'Validation'],
  ['Verification is the process to find whether the software meets the specified requirements for particular phase.', 'The validation process checks whether the software meets requirements and expectations of the customer.'],
  ['It evaluates an intermediate product.', 'It evaluates the final product.'],
  ['The objective of verification is to check whether software is constructed according to requirement and design specification.', 'The objective of validation is to check whether the specifications are correct and satisfy the business need.'],
  ['It describes whether the outputs are as per the inputs or not.', 'It explains whether output are accepted by the user or not.'],
  ['Verification is completed before the validation.', 'It is completed after the verification.'],
  ['Plans, requirement, specification, code are evaluated in the verifications.', 'Actual product or software is tested under validation.'],
];

const thumb16 = [
  ['The incremental model combines the elements of waterfall', 'model and they are applied in an iterative fashion.'],
  ['The first increment in this model is generally a core product.'],
  ['Each increment builds the product and submits it to the', 'customer for suggesting any modifications.'],
  ["The next increment implements the customer's suggestions and", 'add additional requirements in the previous increment.'],
  ['This process is repeated until the product is completed.', 'For example, the word-processing software is developed', 'using the incremental model.'],
];

const slideLines = [
  ['The incremental model combines the elements of waterfall', 'model and they are applied in an iterative fashion.'],
  ['The first increment in this model is generally a core product.'],
  ['Each increment builds the product and submits it to the', 'customer for suggesting any modifications.'],
  ["The next increment implements the customer's suggestions and", 'add additional requirements in the previous increment.'],
];

const App: React.FC = () => (
  <Page>
    <GlobalStyle />
    <Screen>
      <TitleBar>
        <Qat>
          <Svg w={13}><rect x="0.500" y="0.500" width="12" height="12" rx="1" fill="#3f4fa3" stroke="#27306e" /><rect x="3" y="1" width="7" height="4" fill="#e9eef8" /></Svg>
          <QatGap $w={9} />
          <Svg w={12}><path d="M2 2v5h5M2 7c2-5 7-4 8 1" stroke="#9aa9bf" strokeWidth="1.800" /></Svg>
          <Caret $muted />
          <QatGap $w={11} />
          <Svg w={13}><path d="M11 2v5H6M11 7C9 2 3 3 2 8c0 3 3 4 5 3" stroke="#2c62b4" strokeWidth="2" /></Svg>
        </Qat>
        <QatMore>
          <Svg w={7} h={6}><path d="M1 1h5M1 4h5l-2.500 2z" stroke="#33456a" /></Svg>
        </QatMore>
        <TitleText>
          <span>Software Engineering</span>
          <span>Microsoft PowerPoint</span>
        </TitleText>
        <WindowButtons>
          <Svg w={12}><path d="M3 9h6" stroke="#46566d" strokeWidth="2" /></Svg>
          <Svg w={12}><path d="M2 4h7v6H2zM4 4V2h7v6H9" stroke="#46566d" /></Svg>
          <Svg w={12}><path d="M1.500 1.500l9 9M10.500 1.500l-9 9" stroke="#5a6a82" strokeWidth="1.600" /></Svg>
        </WindowButtons>
      </TitleBar>

      <TabRow>
        <Tab $w={52} $active>Home</Tab>
        <Tab $w={60}>Insert</Tab>
        <Tab $w={62}>Design</Tab>
        <Tab $w={88}>Animations</Tab>
        <Tab $w={80}>Slide Show</Tab>
        <Tab $w={70}>Review</Tab>
        <Tab $w={46}>View</Tab>
        <Tab $w={90}>Nitro Pro 8</Tab>
        <HelpIcon>?</HelpIcon>
      </TabRow>

      <Ribbon>
        <Group $w={147}>
          <GroupBody>
            <BigButton $w={44}>
              <BigIcon><PasteIcon /></BigIcon>
              Paste
              <Caret />
            </BigButton>
            <SmallColumn>
              <SmallRow><CutIcon /><span>Cut</span></SmallRow>
              <SmallRow><CopyIcon /><span>Copy</span></SmallRow>
              <SmallRow><BrushIcon /><span>Format Painter</span></SmallRow>
            </SmallColumn>
          </GroupBody>
          <GroupLabel $launcher>Clipboard<Launcher /></GroupLabel>
        </Group>

        <Group $w={116}>
          <GroupBody>
            <BigButton $w={44}>
              <BigIcon><NewSlideIcon /></BigIcon>
              New
              <span>Slide<Caret /></span>
            </BigButton>
            <SmallColumn>
              <SmallRow><LayoutIcon /><span>Layout<Caret /></span></SmallRow>
              <SmallRow><ResetIcon /><span>Reset</span></SmallRow>
              <SmallRow><DeleteIcon /><span>Delete</span></SmallRow>
            </SmallColumn>
          </GroupBody>
          <GroupLabel>Slides</GroupLabel>
        </Group>

        <Group $w={221}>
          <GroupBody>
            <ControlColumn>
              <ControlRow>
                <Field $w={100}><Caret $muted /></Field>
                <Field $w={39}>26<Caret $muted /></Field>
                <ButtonGroup>
                  <FmtButton $w={21} $serif>A</FmtButton>
                  <FmtButton $w={21} $serif>A</FmtButton>
                </ButtonGroup>
                <ButtonGroup><FmtButton $w={21}><Svg w={14}><path d="M2 10l5-7 5 4-4 6H5z" fill="#f1f5fb" stroke="#8a97ab" /></Svg></FmtButton></ButtonGroup>
              </ControlRow>
              <ControlRow>
                <ButtonGroup>
                  <FmtButton $w={22} $serif>B</FmtButton>
                  <FmtButton $w={23} $serif><i>I</i></FmtButton>
                  <FmtButton $w={24} $serif><u>U</u></FmtButton>
                  <FmtButton $w={24} $size={10}><s>abc</s></FmtButton>
                  <FmtButton $w={21}>S</FmtButton>
                  <FmtButton $w={29} $size={9}>AV<Caret $muted /></FmtButton>
                  <FmtButton $w={28} $serif>Aa</FmtButton>
                </ButtonGroup>
                <ButtonGroup>
                  <FmtButton $w={34} $serif>A<Caret $muted /></FmtButton>
                </ButtonGroup>
              </ControlRow>
            </ControlColumn>
          </GroupBody>
          <GroupLabel $launcher>Font<Launcher /></GroupLabel>
        </Group>

        <Group $w={289}>
          <GroupBody>
            <ControlColumn>
              <ControlRow>
                <ButtonGroup>
                  <FmtButton $w={24} $hot><BulletsIcon /></FmtButton>
                  <FmtButton $w={10}><Caret $muted /></FmtButton>
                  <FmtButton $w={30}><NumbersIcon /></FmtButton>
                </ButtonGroup>
                <ButtonGroup>
                  <FmtButton $w={21}><IndentIcon /></FmtButton>
                  <FmtButton $w={21}><IndentIcon flip /></FmtButton>
                </ButtonGroup>
                <ButtonGroup>
                  <FmtButton $w={30}><SpacingIcon /></FmtButton>
                </ButtonGroup>
              </ControlRow>
              <ControlRow>
                <ButtonGroup>
                  <FmtButton $w={22}><Lines /></FmtButton>
                  <FmtButton $w={22}><Lines align="c" /></FmtButton>
                  <FmtButton $w={24}><Lines align="r" /></FmtButton>
                  <FmtButton $w={24}><Lines align="j" /></FmtButton>
                  <FmtButton $w={30}><Lines align="j" /></FmtButton>
                </ButtonGroup>
              </ControlRow>
            </ControlColumn>
            <SmallColumn $left={3}>
              <SmallRow $muted><TextDirIcon /><span>Text Direction<Caret $muted /></span></SmallRow>
              <SmallRow $muted><DisabledBox /><span>Align Text<Caret $muted /></span></SmallRow>
              <SmallRow $muted><DisabledBox /><span>Convert to SmartArt<Caret $muted /></span></SmallRow>
            </SmallColumn>
          </GroupBody>
          <GroupLabel $dark $launcher>Paragraph<Launcher /></GroupLabel>
        </Group>

        <Group $w={340}>
          <GroupBody>
            <SmallColumn $left={3} $top={4}><ShapeGallery /></SmallColumn>
            <GalleryScroll>
              <Arrow $up $color="#a7b6ca" />
              <Arrow $color="#8c9cb3" />
              <Arrow $color="#8c9cb3" />
            </GalleryScroll>
            <BigButton $w={48} $left={2}>
              <BigIcon><ArrangeIcon /></BigIcon>
              Arrange
              <Caret />
            </BigButton>
            <BigButton $w={44} $left={-3} $muted>
              <BigIcon><QuickStylesIcon /></BigIcon>
              Quick
              <span>Styles<Caret $muted /></span>
            </BigButton>
            <SmallColumn $left={1}>
              <SmallRow $muted><FillIcon kind="fill" /><span>Shape Fill<Caret $muted /></span></SmallRow>
              <SmallRow $muted><FillIcon kind="line" /><span>Shape Outline<Caret $muted /></span></SmallRow>
              <SmallRow $muted><FillIcon kind="fx" /><span>Shape Effects<Caret $muted /></span></SmallRow>
            </SmallColumn>
          </GroupBody>
          <GroupLabel $launcher>Drawing<Launcher /></GroupLabel>
        </Group>

        <Group $w={81}>
          <GroupBody>
            <SmallColumn $left={2}>
              <SmallRow $dark><FindIcon /><span>Find</span></SmallRow>
              <SmallRow $dark><ReplaceIcon /><span>Replace<Caret /></span></SmallRow>
              <SmallRow $dark><SelectIcon /><SelectLabel>Select<Caret /></SelectLabel></SmallRow>
            </SmallColumn>
          </GroupBody>
          <GroupLabel>Editing</GroupLabel>
        </Group>
      </Ribbon>

      <Workspace>
        <SlidePane>
          <PaneTabs>
            <PaneTab $active $w={70}>Slides</PaneTab>
            <PaneTab $w={72}>Outline</PaneTab>
            <PaneClose>x</PaneClose>
          </PaneTabs>
          <PaneBody>
            <ThumbList>
              <ThumbRow>
                <ThumbNumber>13</ThumbNumber>
                <Thumb>
                  <ThumbFrame>
                    {thumb13.map((t, i) => (t.head
                      ? <ThumbHeading key={i}>{t.head}</ThumbHeading>
                      : <ThumbItem key={i}>{t.item!.map(l => <div key={l}>{l}</div>)}</ThumbItem>))}
                  </ThumbFrame>
                </Thumb>
              </ThumbRow>
              <ThumbRow>
                <ThumbNumber>14</ThumbNumber>
                <Thumb>
                  <ThumbFrame>
                    <TableTitle>Difference between the Verification and Validation</TableTitle>
                    <MiniTable>
                      {table14.flatMap((row, r) => row.map((c, i) => <MiniCell key={`${r}-${i}`} $head={r === 0}>{c}</MiniCell>))}
                    </MiniTable>
                  </ThumbFrame>
                </Thumb>
              </ThumbRow>
              <ThumbRow>
                <ThumbNumber>15</ThumbNumber>
                <Thumb>
                  <ThumbFrame $bare><IncrementDiagram /></ThumbFrame>
                </Thumb>
              </ThumbRow>
              <ThumbRow $selected>
                <ThumbNumber>16</ThumbNumber>
                <Thumb $h={119}>
                  <ThumbFrame $top={1}>
                    {thumb16.map((t, i) => <ThumbItem key={i}>{t.map(l => <div key={l}>{l}</div>)}</ThumbItem>)}
                  </ThumbFrame>
                </Thumb>
              </ThumbRow>
            </ThumbList>
            <PaneScroll>
              <Arrow $up />
              <ScrollThumb $top={335} $h={50}><ScrollGrip /></ScrollThumb>
              <Arrow />
            </PaneScroll>
          </PaneBody>
        </SlidePane>

        <Splitter />

        <Editor>
          <EditorTop>
            <Canvas>
              <RulerRow><Ruler /></RulerRow>
              <CanvasBody>
                <VerticalRuler />
                <Slide>
                  <SlideFrame>
                    {slideLines.map((lines, i) => (
                      <SlideItem key={i}>
                        <BulletCol><BulletDot /></BulletCol>
                        <div>{lines.map(l => <SlideLine key={l}>{l}</SlideLine>)}</div>
                      </SlideItem>
                    ))}
                    <SlideItem>
                      <BulletCol><BulletDot /></BulletCol>
                      <div>
                        <SlideLine>This process is repeated until the product is completed.</SlideLine>
                        <SlideLine><SlideBold>For example</SlideBold>, the word-processing software is developed</SlideLine>
                        <SlideLine>using the incremental model.</SlideLine>
                      </div>
                    </SlideItem>
                  </SlideFrame>
                </Slide>
              </CanvasBody>
            </Canvas>
            <EditorScroll>
              <ScrollTrack>
                <Arrow $up />
                <ScrollThumb $top={315} $h={18}><ScrollGrip /></ScrollThumb>
                <Arrow />
              </ScrollTrack>
              <PageJump>
                <Svg w={10} h={11}><path d="M5 0l4 4H1zM5 5l4 5H1z" fill="#111" /></Svg>
                <Svg w={10} h={11}><path d="M1 0h8l-4 5zM1 6h8l-4 5z" fill="#111" /></Svg>
              </PageJump>
            </EditorScroll>
          </EditorTop>
          <NotesRule />
          <NotesRow>
            <Notes>Click to add notes</Notes>
            <NotesScroll>
              <div>
                <Arrow $up $color="#6a85ae" />
                <Arrow $color="#6a85ae" />
              </div>
            </NotesScroll>
          </NotesRow>
        </Editor>
      </Workspace>

      <StatusBar>
        <StatusCell $w={85} $pad={8}>Slide 16 of 20</StatusCell>
        <StatusCell $w={56} $pad={9}>"Equity"</StatusCell>
        <StatusRight>
          <ViewGroup>
            <Svg w={14} h={12}><path d="M1 1h12v10H1zM6 1v10M6 5h7" stroke="#3d5c8a" /></Svg>
            <Svg w={14} h={12}><path d="M1 1h5v4H1zM8 1h5v4H8zM1 7h5v4H1zM8 7h5v4H8z" stroke="#3d5c8a" /></Svg>
            <Svg w={14} h={12}><path d="M1 1h12v6H1zM7 7v4M4 11h6" stroke="#3d5c8a" /></Svg>
          </ViewGroup>
          <Zoom>64%</Zoom>
          <ZoomButton>-</ZoomButton>
          <ZoomTrack><ZoomThumb /></ZoomTrack>
          <ZoomButton>+</ZoomButton>
          <FitButton />
        </StatusRight>
      </StatusBar>
    </Screen>

    <Toolbar>
      <ToolButton $w={68}>
        <ToolIcon><MicOff /></ToolIcon>
        Unmute
        <UpChevron right={-3} />
      </ToolButton>
      <ToolButton $w={92} $left={12}>
        <ToolIcon><VideoOff /></ToolIcon>
        Start Video
        <UpChevron right={0} />
      </ToolButton>
      <ToolButton $w={90} $left={329}>
        <ToolIcon><PeopleIcon /><Count>12</Count></ToolIcon>
        Participants
      </ToolButton>
      <ToolButton $w={80}>
        <ToolIcon><ChatIcon /></ToolIcon>
        Chat
      </ToolButton>
      <ToolButton $w={96} $green>
        <ToolIcon><ShareIcon /></ToolIcon>
        Share Screen
      </ToolButton>
      <ToolButton $w={82}>
        <ToolIcon><RecordIcon /></ToolIcon>
        Record
      </ToolButton>
      <ToolButton $w={78}>
        <ToolIcon><ReactionIcon /></ToolIcon>
        Reactions
      </ToolButton>
      <LeaveButton>Leave</LeaveButton>
    </Toolbar>

    <OfficeOrb width="40" height="40" viewBox="0 0 40 40">
      <circle cx="19" cy="20" r="17" fill="#eef2f8" stroke="#9fb0c6" />
      <rect x="11" y="13" width="7" height="8" fill="#e58a1e" />
      <rect x="19" y="13" width="7" height="8" fill="#4b8fd0" />
      <rect x="11" y="22" width="7" height="8" fill="#d9a31c" />
      <rect x="19" y="22" width="7" height="8" fill="#6aa22c" />
    </OfficeOrb>
    <BadgeGroup>
      <Badge>
        <Svg w={16}><circle cx="8" cy="8" r="6.500" stroke="#b5b5b5" /><path d="M8 7v4.500M8 4.500v1" stroke="#b5b5b5" strokeWidth="1.400" /></Svg>
      </Badge>
      <Badge>
        <Svg w={16}><path d="M8 1.500l5.500 2V8c0 3-2.500 5-5.500 6.500C5 13 2.500 11 2.500 8V3.500z" stroke="#b5b5b5" /><path d="M5.500 8l2 2 3-3.500" stroke="#b5b5b5" /></Svg>
      </Badge>
    </BadgeGroup>
    <RecDot />
    <RecLabel>Recording</RecLabel>

    <Banner>
      <BannerGreen>You are viewing Rashmi Pandey's screen</BannerGreen>
      <BannerDark>
        View Options
        <svg width="8" height="5" viewBox="0 0 8 5" fill="none"><path d="M1 1l3 3 3-3" stroke="#f2f2f2" strokeWidth="1.300" /></svg>
      </BannerDark>
    </Banner>

    <WarnFrame />
    <WarnText>
      <span>Please move this</span>
      <span>window away from</span>
    </WarnText>
    <WarnFoot />

    <IBeam width="7" height="16" viewBox="0 0 7 16" fill="none">
      <path d="M1 1h2l.5 1L4 1h2M3.500 2v12M1 15h2l.5-1 .5 1h2" stroke="#333" />
    </IBeam>
  </Page>
);

export default App;
